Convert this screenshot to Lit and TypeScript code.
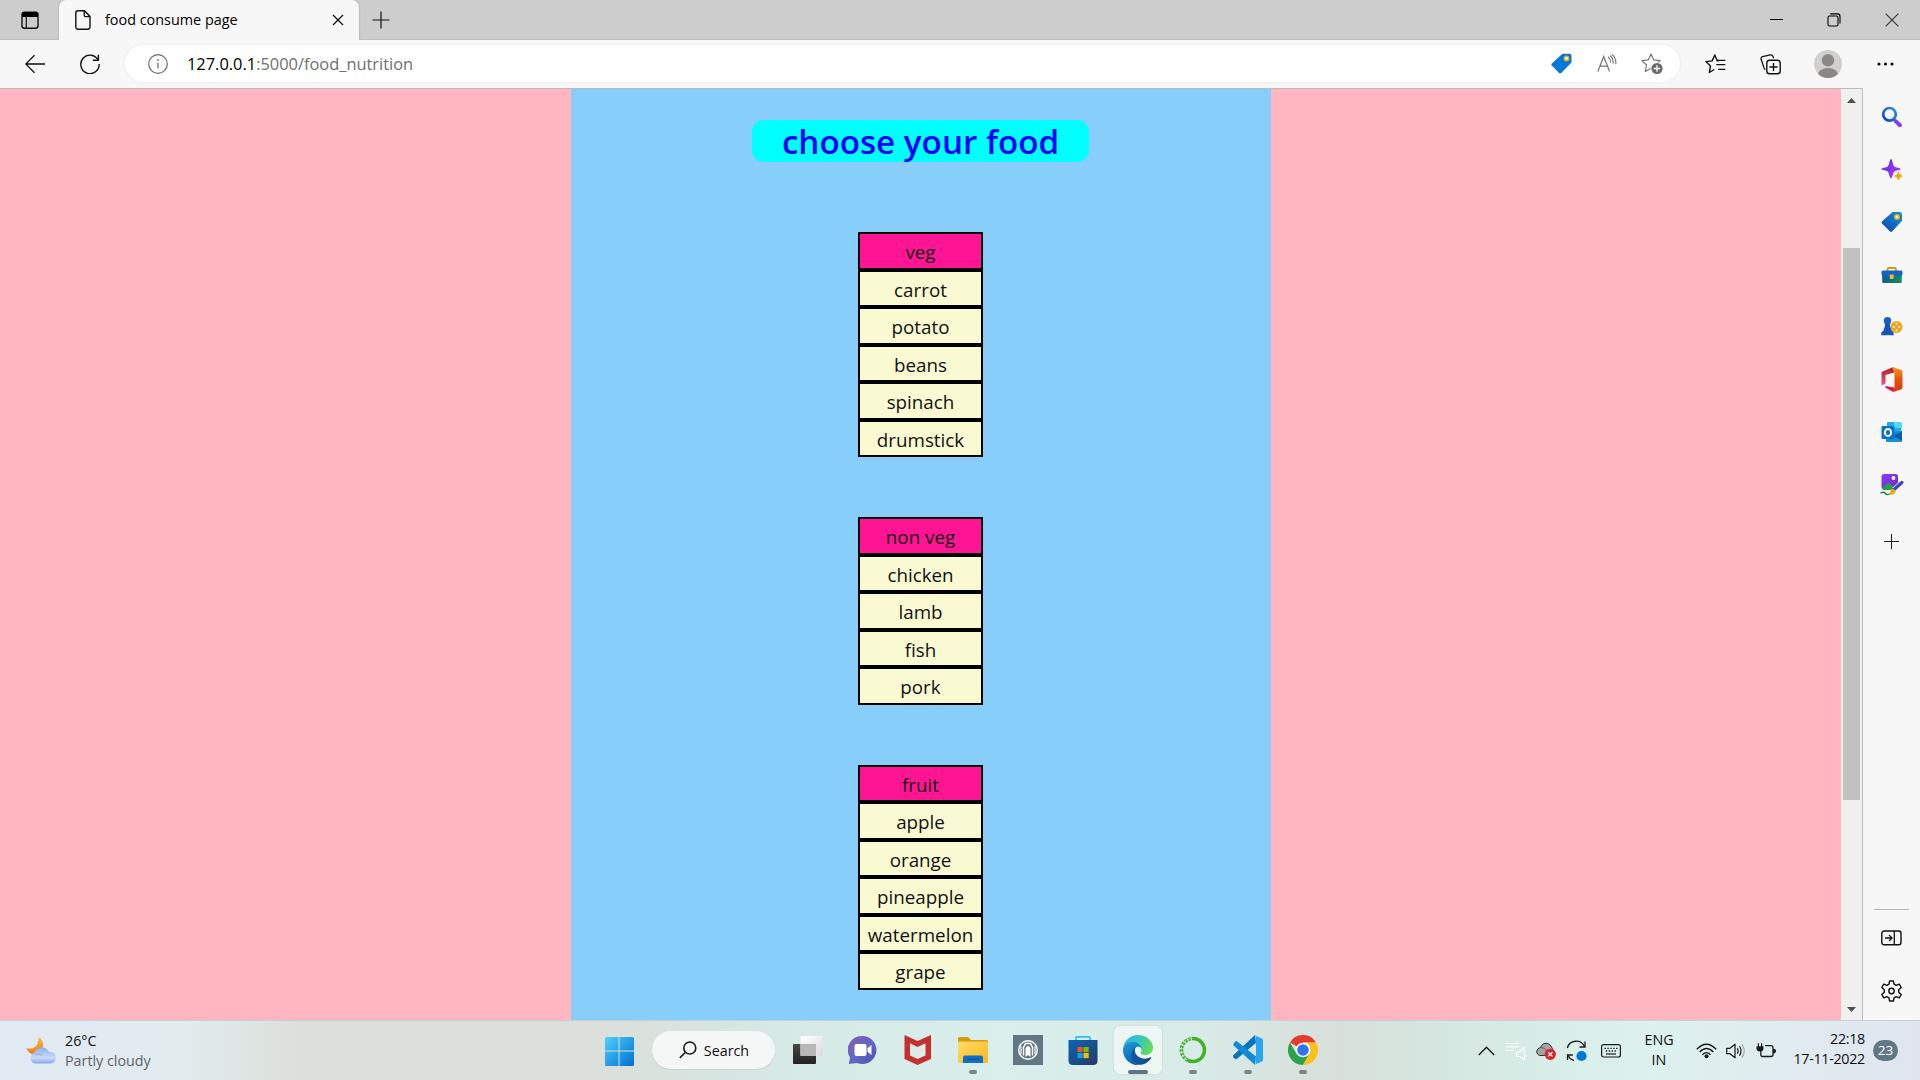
import { LitElement, html, css, svg, SVGTemplateResult, TemplateResult } from "lit";
import { customElement } from "lit/decorators.js";

/** Wraps drawing content in an svg whose pixel size equals its view box. */
const icon = (w: number, h: number, body: SVGTemplateResult, vb?: string): TemplateResult =>
  html`<svg class="ic" width=${w} height=${h} viewBox=${vb ?? `0 0 ${w} ${h}`} fill="none">${body}</svg>`;

/* ---------- browser chrome ---------- */
const tabMenu = icon(20, 20, svg`<rect x="2" y="2.2" width="16" height="16" rx="2.5" stroke="#111" stroke-width="1.4"/><path d="M2 7V4.5Q2 2 4.500 2H15.500Q18 2 18 4.500V7Z" fill="#000"/><path d="M6.300 7V18" stroke="#111" stroke-width="1.200"/>`);
const docIcon = icon(16, 20, svg`<path d="M3 .8H9.400L15 6.400V17a2.200 2.200 0 0 1-2.200 2.200H3A2.200 2.200 0 0 1 .8 17V3A2.200 2.200 0 0 1 3 .8Z" stroke="#111" stroke-width="1.400"/><path d="M9.200 1V5.200Q9.200 6.600 10.600 6.600H14.800" stroke="#111" stroke-width="1.300"/>`);
const tabClose = icon(12, 12, svg`<path d="M1 1 11 11M11 1 1 11" stroke="#111" stroke-width="1.300"/>`);
const plus18 = icon(18, 18, svg`<path d="M9 .5V17.500M.5 9H17.500" stroke="#111" stroke-width="1.200"/>`);
const minIcon = icon(13, 13, svg`<path d="M0 6.500H13" stroke="#000"/>`);
const restoreIcon = icon(14, 14, svg`<rect x="1" y="3" width="10" height="10" rx="1.500" stroke="#000" stroke-width="1.100"/><path d="M3.200 .9H10.500Q13 .9 13 3.400V10.500" stroke="#000" stroke-width="1.100"/>`);
const closeIcon = icon(14, 14, svg`<path d="M.6 .6 13.400 13.400M13.400 .6 .6 13.400" stroke="#333" stroke-width="1.100"/>`);
const backIcon = icon(20, 20, svg`<path d="M20 10H1M9.500 1.200.8 10 9.500 18.800" stroke="#111" stroke-width="1.300"/>`);
const reloadIcon = icon(20, 20, svg`<path d="M18.200 6.200A9.200 9.200 0 1 0 19.200 10" stroke="#111" stroke-width="1.400"/><path d="M18.400 .8V6.200H12.800" stroke="#111" stroke-width="1.400"/>`);
const infoIcon = icon(20, 20, svg`<circle cx="10" cy="10" r="9.300" stroke="#6b6b6b" stroke-width="1.200"/><path d="M10 8.700V14.500" stroke="#6b6b6b" stroke-width="1.300"/><circle cx="10" cy="6" r=".9" fill="#6b6b6b"/>`);
const tagIcon = icon(21, 21, svg`<path d="M11.500 .7H18.500Q20.500 .7 20.500 2.700V9.600L10.200 20Q9.200 20.800 8.200 20L.8 12.600Q-.1 11.600.8 10.600Z" fill="#0078d7"/><circle cx="15.500" cy="5.500" r="2.200" fill="#fff" stroke="#e5ad0c" stroke-width="1.600"/>`);
const readIcon = icon(20, 20, svg`<path d="M.8 17.500 6.700 2.500 12.600 17.500M2.900 12.200H10.500" stroke="#767676" stroke-width="1.200"/><path d="M11 2.800Q13.500 4.800 13.600 8.700M13.200 1.500Q16.300 4.200 16.200 9.700M15.200 .5Q19.300 4 18.900 10.200" stroke="#767676" stroke-width="1.100"/>`);
const starPath = "M10 .9 12.700 6.900 19.200 7.600 14.400 12 15.700 18.500 10 15.200 4.300 18.500 5.600 12 .8 7.600 7.300 6.900Z";
const addFav = icon(22, 21, svg`<path d=${starPath} stroke="#767676" stroke-width="1.200" stroke-linejoin="round"/><circle cx="16" cy="15.500" r="6.300" fill="#fff"/><circle cx="16" cy="15.500" r="5.600" fill="#6a6a6a"/><path d="M16 12.300V18.700M12.800 15.500H19.200" stroke="#fff" stroke-width="1.300"/>`);
const favIcon = icon(21, 20, svg`<path d="M13.700 7.100 12.300 6.900 9.800 1 7.100 6.900.9 7.600 5.500 12 4.300 18.500 9.300 15.500" stroke="#111" stroke-width="1.400" stroke-linejoin="round"/><path d="M12.300 6.300H20.300M11.300 10.700H20.300M13 15.300H20.300" stroke="#111" stroke-width="1.300"/>`);
const collIcon = icon(21, 21, svg`<path d="M4 13.900 1.100 5.300Q.6 3.300 2.500 2.700L10.300.9Q12.300.6 12.900 2.300L13.600 4.300" stroke="#111" stroke-width="1.300"/><path d="M4 13.900Q4.600 15.300 5.400 15.600" stroke="#111" stroke-width="1.300"/><rect x="6.800" y="6.300" width="13.400" height="13.400" rx="2.800" stroke="#111" stroke-width="1.400"/><path d="M13.500 8.900V17.100M9.400 13H17.600" stroke="#111" stroke-width="1.400"/>`);
const avatar = icon(28, 28, svg`<clipPath id="av"><circle cx="14" cy="14" r="14"/></clipPath><circle cx="14" cy="14" r="14" fill="#d2d0ce"/><g clip-path="url(#av)" fill="#8a8785"><circle cx="14" cy="10.300" r="6.200"/><ellipse cx="14" cy="25" rx="10.200" ry="7"/></g>`);
const dotsIcon = icon(17, 4, svg`<circle cx="2" cy="2" r="1.600" fill="#111"/><circle cx="8.500" cy="2" r="1.600" fill="#111"/><circle cx="15" cy="2" r="1.600" fill="#111"/>`);

/* ---------- sidebar ---------- */
const sideIcons = [
  icon(22, 22, svg`<defs><linearGradient id="s1" x1="0" y1="1" x2="1" y2="0"><stop stop-color="#0b3fd0"/><stop offset="1" stop-color="#2c93dc"/></linearGradient></defs><path d="M13 13.500 15 15.500" stroke="#555" stroke-width="2.500"/><path d="M14.900 15.400 18.900 19.200" stroke="#7b3ff2" stroke-width="4" stroke-linecap="round"/><circle cx="8.500" cy="8.300" r="6.300" fill="#f4faff" stroke="url(#s1)" stroke-width="2.700"/>`),
  icon(22, 22, svg`<defs><linearGradient id="s2" x1="0" y1="0" x2="1" y2="1"><stop stop-color="#4a3df0"/><stop offset=".5" stop-color="#8a32f0"/><stop offset="1" stop-color="#a93ff5"/></linearGradient></defs><path d="M10 1C11.300 1 12 7.500 13.300 8.500 14.500 9.500 19.500 9.700 19.500 11 19.500 12.300 14.500 12.500 13.300 13.500 12 14.500 11.300 20.500 10 20.500 8.700 20.500 8 14.500 6.700 13.500 5.500 12.500.5 12.300.5 11 .5 9.700 5.500 9.500 6.700 8.500 8 7.500 8.700 1 10 1Z" fill="url(#s2)"/><path d="M17.500 13Q18.500 17 22 18 18.500 19 17.500 22.500 16.500 19 13 18 16.500 17 17.500 13Z" fill="#f3a90c"/>`),
  icon(22, 22, svg`<defs><linearGradient id="s3" x1="0" y1="1" x2="1" y2="0"><stop stop-color="#0b45b5"/><stop offset="1" stop-color="#1793cc"/></linearGradient></defs><path d="M11.500 1H18.500Q21 1 21 3.500V9.800L11.300 20.300Q10 21.500 8.800 20.300L1.200 12.800Q0 11.500 1.200 10.300Z" fill="url(#s3)"/><circle cx="16" cy="6" r="2.200" fill="#fff" stroke="#e5ad0c" stroke-width="1.600"/>`),
  icon(22, 22, svg`<defs><linearGradient id="s4" x1="0" y1="0" x2="1" y2="0"><stop stop-color="#0d5a9b"/><stop offset="1" stop-color="#12905a"/></linearGradient></defs><path d="M6.500 7V5.500Q6.500 4 8 4H13.500Q15 4 15 5.500V7" stroke="#d9960d" stroke-width="1.900"/><rect x="1.200" y="10" width="19.600" height="9" rx="1.300" fill="url(#s4)"/><rect x=".5" y="6.500" width="21" height="5" rx="1.500" fill="#1464c8"/><rect x="8.700" y="10.500" width="4" height="4.500" rx="1" fill="#f5b62a"/>`),
  icon(22, 22, svg`<circle cx="15.500" cy="11" r="6" fill="#eda51b"/><g fill="#fff"><circle cx="15.500" cy="7.700" r="1"/><circle cx="12.800" cy="11" r="1"/><circle cx="18.300" cy="11" r="1"/><circle cx="15.500" cy="14.200" r="1"/></g><circle cx="6.500" cy="4.700" r="3.700" fill="#1862c4"/><path d="M3.500 7.300H9.500L8.800 9 10.500 14.500 12.700 16.800V19.300H.2V16.800L2.500 14.500 4.200 9Z" fill="#1656b8"/>`),
  icon(22, 25, svg`<defs><linearGradient id="s6" x1="0" y1="0" x2="0" y2="1"><stop stop-color="#f59a1d"/><stop offset=".5" stop-color="#e3500b"/><stop offset="1" stop-color="#d93b08"/></linearGradient><linearGradient id="s7" x1="0" y1="0" x2="0" y2="1"><stop stop-color="#b3251b"/><stop offset="1" stop-color="#e9528f"/></linearGradient></defs><path d="M11 .5 1.600 4.500Q.5 5 .5 6.300V18.500L4.500 16.500V8L13.500 5.500V.8Z" fill="url(#s7)"/><path d="M13 .5 20 2.800Q21.500 3.300 21.500 4.800V20.500Q21.500 22 20 22.500L12.500 24.700 13.500 20V5L11 .5Z" fill="url(#s6)"/><path d="M4.500 19 13.500 20.500V24.500Q12 25 10.600 24.300L4.500 20.800Z" fill="#d32345"/>`),
  icon(22, 22, svg`<rect x="6" y="1" width="14.500" height="11" rx="1" fill="#28a8ea"/><path d="M13 1H19.500Q20.500 1 20.500 2V7H13Z" fill="#50d9ff"/><path d="M5 11 21 10V20Q21 21 20 21H6Q5 21 5 20Z" fill="#1490df"/><path d="M21 10.500V20L12 14.500Z" fill="#0a5da8"/><rect x=".5" y="5" width="13" height="13" rx="1.300" fill="#0f72c9"/><ellipse cx="7" cy="11.500" rx="3.200" ry="3.500" stroke="#fff" stroke-width="1.900"/>`),
  icon(24, 24, svg`<defs><linearGradient id="s8" x1="0" y1="0" x2="1" y2="1"><stop stop-color="#8a3ff3"/><stop offset="1" stop-color="#7522c8"/></linearGradient></defs><rect x="1.500" y="1" width="16.500" height="15.500" rx="2.500" fill="url(#s8)"/><circle cx="13.500" cy="5" r="1.900" fill="#fff"/><path d="M2 15 8.500 9.500 16 15.500 13 17H4.500Q2.500 17 2 15Z" fill="#1fa04b"/><path d="M0 18H18" stroke="#f7f7f7" stroke-width="1.500"/><path d="M.5 20Q4 18.500 5 20T7.500 21.500 10.500 20.500" stroke="#138a3c" stroke-width="1.500"/><path d="M14 16.500 21.800 9.500" stroke="#f7f7f7" stroke-width="5"/><path d="M13.500 17 21.800 9.500" stroke="#3949c6" stroke-width="3.400" stroke-linecap="round"/><path d="M11.800 15.700Q15.500 16 15.500 19.300 13.500 23 8.700 21.800 10.500 20.500 10.300 18 10.700 16 11.800 15.700Z" fill="#f0a51c"/>`),
];
const plus15 = icon(15, 15, svg`<path d="M7.500 0V15M0 7.500H15" stroke="#222" stroke-width="1.100"/>`);
const panelIcon = icon(21, 16, svg`<rect x=".8" y="1" width="19.200" height="13.800" rx="2.300" stroke="#111" stroke-width="1.400"/><path d="M13.300 1V15M4 8H11M8 5 11 8 8 11" stroke="#111" stroke-width="1.300"/>`);
const gearIcon = icon(21, 22, svg`<path d="M8.600 1H12.400L13 4.100 15.200 5.400 18.300 4.200 20.200 7.500 17.700 9.700V12.300L20.200 14.500 18.300 17.800 15.200 16.600 13 17.900 12.400 21H8.600L8 17.900 5.800 16.600 2.700 17.800.8 14.500 3.300 12.300V9.700L.8 7.500 2.700 4.200 5.800 5.400 8 4.100Z" stroke="#111" stroke-width="1.400" stroke-linejoin="round"/><circle cx="10.500" cy="11" r="2.700" stroke="#111" stroke-width="1.400"/>`);

/* ---------- taskbar ---------- */
const weather = icon(32, 28, svg`<defs><linearGradient id="w1" x1="0" y1="0" x2="0" y2="1"><stop stop-color="#f6bd42"/><stop offset="1" stop-color="#ec7c1c"/></linearGradient><linearGradient id="w2" x1="0" y1="0" x2="0" y2="1"><stop stop-color="#8eaeea"/><stop offset=".65" stop-color="#c9dbf8"/><stop offset="1" stop-color="#87a5e6"/></linearGradient></defs><path d="M12.500 0Q19 4 16.500 12 13 18.500 6 17 1.500 15 .5 11 5 13 9.500 9.500 13 6 12.500 0Z" fill="url(#w1)"/><path d="M9.500 26.500A5.500 5.500 0 0 1 8.500 15.800Q11 9.800 17 10.500 21.500 11 23.300 15 29.500 14.500 30 20.700 29.500 26 24.500 26.500Z" fill="url(#w2)"/><path d="M9 17.200Q13 16 16 18.500" stroke="#7f9fe2" stroke-width=".8"/>`);
const startLogo = icon(30, 30, svg`<defs><linearGradient id="t0" gradientUnits="userSpaceOnUse" x1="0" y1="0" x2="29" y2="29"><stop stop-color="#4fd2fb"/><stop offset="1" stop-color="#0270d4"/></linearGradient></defs><path d="M1.500 1H13.500V14.500H0V2.500Q0 1 1.500 1ZM14.500 1H27.500Q29 1 29 2.500V14.500H14.500ZM0 15.500H13.500V30H1.500Q0 30 0 28.500ZM14.500 15.500H29V28.500Q29 30 27.500 30H14.500Z" fill="url(#t0)"/>`);
const searchGlyph = icon(18, 18, svg`<circle cx="10.800" cy="7" r="6" stroke="#1b1b1b" stroke-width="1.600"/><path d="M6.500 11.300.9 16.900" stroke="#1b1b1b" stroke-width="1.600"/>`);
const taskIcons: { body: TemplateResult; run?: boolean; active?: boolean }[] = [
  { body: icon(30, 30, svg`<defs><linearGradient id="t1" x1="0" y1="0" x2="0" y2="1"><stop stop-color="#474745"/><stop offset="1" stop-color="#222"/></linearGradient><linearGradient id="t2" x1="0" y1="0" x2="1" y2="1"><stop stop-color="#fff"/><stop offset="1" stop-color="#d9dcdb"/></linearGradient></defs><rect x="0" y="9" width="23" height="20" rx="1" fill="url(#t1)"/><rect x="7.500" y="1" width="22.500" height="20" rx="1" fill="url(#t2)"/><rect x="7.500" y="9" width="15.500" height="12" fill="#b7b8b7"/>`) },
  { body: icon(30, 30, svg`<defs><linearGradient id="t3" x1="0" y1="0" x2="1" y2="1"><stop stop-color="#8d5aa8"/><stop offset=".5" stop-color="#6268c4"/><stop offset="1" stop-color="#4f4fb8"/></linearGradient></defs><path d="M15 1A14 14 0 1 1 9 27.900L.8 29 2 22.500A14 14 0 0 1 15 1Z" fill="url(#t3)"/><rect x="6.500" y="9" width="12" height="12" rx="2" fill="#fff"/><path d="M19.500 13.200 23.500 10V20L19.500 16.800Z" fill="#fff"/>`) },
  { body: icon(30, 32, svg`<path d="M1.500 1 14.500 7 28 1V25L14.500 31 1.500 25Z" fill="#c5302e"/><path d="M7 9.200 14.500 13 22.500 9.200V21.500L14.500 25 7 21.500Z" fill="#dcebe7"/>`) },
  { run: true, body: icon(30, 30, svg`<defs><linearGradient id="t4" x1="0" y1="0" x2="1" y2="1"><stop stop-color="#ffdc67"/><stop offset="1" stop-color="#f6b81d"/></linearGradient></defs><path d="M0 3.500Q0 2 1.500 2H10L13 5H28.500Q30 5 30 6.500V12H0Z" fill="#d99a0a"/><rect x="0" y="6.500" width="30" height="21.500" rx="1.500" fill="url(#t4)"/><path d="M5 28V22.500Q5 20.500 7 20.500H23Q25 20.500 25 22.500V28Z" fill="#0f6fc5"/><path d="M9 24.300H21" stroke="#0a4c91" stroke-width="1.200"/>`) },
  { body: icon(30, 30, svg`<rect width="30" height="30" fill="#617784"/><circle cx="15" cy="15" r="9.300" stroke="#fff" stroke-width="1.500"/><path d="M10.500 20.500V12.500L12.500 8.500H17.500L19.500 12.500V20.500" stroke="#fff" stroke-width="1.400"/><path d="M12.500 22V13.500Q13 11 15 11T17.500 13.500V22L15 20Z" fill="#fff"/><path d="M8 11V19M22 11V19" stroke="#fff" stroke-width="1.200"/>`) },
  { body: icon(30, 30, svg`<defs><linearGradient id="t5" x1="0" y1="0" x2="1" y2="1"><stop stop-color="#0b64b3"/><stop offset="1" stop-color="#253a66"/></linearGradient></defs><path d="M8 7V3Q8 1.800 9.200 1.800H20.800Q22 1.800 22 3V7" stroke="#2cc0f2" stroke-width="1.700"/><path d="M.5 5H29.500V25.500Q29.500 30 25 30H5Q.5 30 .5 25.500Z" fill="url(#t5)"/><rect x="9.500" y="12" width="5.200" height="5.200" fill="#f25022"/><rect x="15.500" y="12" width="5.200" height="5.200" fill="#7fba00"/><rect x="9.500" y="18" width="5.200" height="5.200" fill="#00a4ef"/><rect x="15.500" y="18" width="5.200" height="5.200" fill="#ffb900"/>`) },
  { run: true, active: true, body: icon(30, 30, svg`<defs><linearGradient id="e1" x1="0" y1="0" x2="1" y2="0"><stop stop-color="#0c59a4"/><stop offset="1" stop-color="#114a8b"/></linearGradient><linearGradient id="e2" x1="0" y1="0" x2=".6" y2="1"><stop stop-color="#1f9fe0"/><stop offset="1" stop-color="#0a5da8"/></linearGradient><linearGradient id="e3" x1="0" y1=".3" x2="1" y2=".6"><stop stop-color="#2fb4e8"/><stop offset=".5" stop-color="#37c6c0"/><stop offset="1" stop-color="#66e04b"/></linearGradient></defs><path d="M235.680 190.460a93.730 93.730 0 0 1-10.540 4.710 101.870 101.870 0 0 1-35.900 6.460c-47.320 0-88.540-32.550-88.540-74.320A31.480 31.480 0 0 1 117.130 100c-42.800 1.800-53.800 46.400-53.800 72.530 0 73.880 68.090 81.370 82.760 81.370 7.910 0 19.840-2.300 27-4.560l1.310-.44a128.340 128.340 0 0 0 66.600-52.800 4 4 0 0 0-5.320-5.640z" fill="url(#e1)"/><path d="M105.730 241.420A79.200 79.200 0 0 1 83 220.080 80.720 80.720 0 0 1 112.530 102c3.120-1.470 8.450-4.130 15.540-4a32.350 32.350 0 0 1 25.690 13 31.880 31.880 0 0 1 6.360 18.660c0-.21 24.460-79.600-80-79.600-43.900 0-80 41.660-80 78.210a130.150 130.150 0 0 0 12.110 56 128 128 0 0 0 156.380 67.110 75.550 75.550 0 0 1-62.780-8z" fill="url(#e2)"/><path d="M152.330 148.860c-.81 1.050-3.300 2.500-3.300 5.660 0 2.610 1.700 5.120 4.720 7.230 14.380 10 41.490 8.680 41.560 8.680a59.560 59.560 0 0 0 30.270-8.350A61.380 61.380 0 0 0 256 109.400c.26-22.410-8-37.310-11.340-43.910C223.460 24 177.720 0 128 0A128 128 0 0 0 0 126.200c.48-36.540 36.800-66.050 80-66.050 3.500 0 23.460.34 42 10.070 16.340 8.580 24.900 18.940 30.850 29.210 6.180 10.670 7.280 24.150 7.280 29.520s-2.740 13.330-7.800 19.910z" fill="url(#e3)"/>`, "0 0 256 256") },
  { run: true, body: icon(30, 30, svg`<path d="M15 3.500A11.500 11.500 0 1 1 10 25.400" stroke="#43b02a" stroke-width="3.600"/><path d="M10 25.400A11.500 11.500 0 0 1 15 3.500" stroke="#43b02a" stroke-width="3.600" stroke-dasharray="2.800 .9"/><path d="M9 25A11.500 11.500 0 0 1 14 3.500" stroke="#d9ede9" stroke-width=".8" stroke-dasharray="3 1"/>`) },
  { run: true, body: icon(30, 30, svg`<path d="M22 0 0 20.500V22L2 24Q3 24.500 4 23.800L23 8Z" fill="#0a74bd"/><path d="M4 6.200 23 21.500 22 30 .3 10.300Q0 9.300.5 8.700L2.200 6.500Q3 5.700 4 6.200Z" fill="#118bd4"/><path d="M21.500 .2 29 3.500Q30 4 30 5.200V24.800Q30 26 29 26.500L21.500 29.800Q23 29 23 27V3Q23 1 21.500 .2Z" fill="#29a4f0"/>`) },
  { run: true, body: icon(30, 30, svg`<path d="M15 15 2 7.500A15 15 0 0 1 28 7.500H15Z" fill="#e33b2e"/><path d="M2 7.500A15 15 0 0 0 15 30L21.500 18.750 15 15 8.500 18.750Z" fill="#2da04a"/><path d="M28 7.500A15 15 0 0 1 15 30L21.500 18.750Q23.500 13 20 9L15 7.500Z" fill="#fbc116"/><circle cx="15" cy="15" r="7.300" fill="#fff"/><circle cx="15" cy="15" r="5.800" fill="#2f74ea"/>`) },
];
const chevron = icon(17, 10, svg`<path d="M.8 9 8.500 1.200 16.200 9" stroke="#1b1b1b" stroke-width="1.400"/>`);
const listSpeaker = icon(20, 20, svg`<path d="M0 2.500H12M0 6H12M0 9.500H8" stroke="#fff" stroke-width="1.200"/><path d="M10.500 11H13.500L18.500 6.500V18.500L13.500 15.500H10.500Z" stroke="#fff" stroke-width="1.200"/>`);
const cloudErr = icon(20, 20, svg`<path d="M4 14.500Q.3 13.500.8 10 1.500 7 4.500 6.500 6.500 1.800 11 2.200 14 2.800 15.500 6L17 9 10 14.500Z" fill="#a5a5a5" stroke="#333" stroke-width="1"/><path d="M4.500 6.500Q9 6 12 11" stroke="#444" stroke-width=".8"/><circle cx="14.300" cy="13.300" r="5.600" fill="#d9252e"/><path d="M12.200 11.200 16.400 15.400M16.400 11.200 12.200 15.400" stroke="#fff" stroke-width="1.300"/>`);
const syncIcon = icon(21, 22, svg`<path d="M1.300 8A9.200 9.200 0 0 1 18.500 6.500M19 1.500V7H13.500M1.500 20V15H6.800M2 15.300Q4 19.500 8 20.500" stroke="#1b1b1b" stroke-width="1.300"/><circle cx="15.500" cy="16" r="5.100" fill="#0078d7"/>`);
const keyboard = icon(20, 14, svg`<rect x=".6" y=".6" width="18.800" height="12.400" rx="2" stroke="#1b1b1b" stroke-width="1.200"/><path d="M3.500 4.300H17M4.800 7H16" stroke="#1b1b1b" stroke-width="1.300" stroke-dasharray="1.400 1.500"/><path d="M5 10H15" stroke="#1b1b1b" stroke-width="1.200"/>`);
const wifi = icon(21, 16, svg`<path d="M.8 6.300Q10.500-3.700 20.200 6.300M3.700 9Q10.500 2 17.300 9M6.500 11.700Q10.500 7.500 14.500 11.700" stroke="#1b1b1b" stroke-width="1.400"/><circle cx="10.500" cy="13.300" r="2" fill="#1b1b1b"/>`);
const volume = icon(20, 16, svg`<path d="M.7 5.300H4L9 1.200V14.800L4 10.700H.7Z" stroke="#1b1b1b" stroke-width="1.200" stroke-linejoin="round"/><path d="M11.300 5.300Q13 8 11.300 10.700M13.500 3.300Q16.500 8 13.500 12.700" stroke="#1b1b1b" stroke-width="1.200"/><path d="M16 1.200Q20.500 8 16 14.800" stroke="#9ba5a5" stroke-width="1.100"/>`);
const battery = icon(21, 16, svg`<path d="M9 2.700H15Q17 2.700 17 4.700V11.500Q17 13.500 15 13.500H6.500Q4.800 13.500 4.800 11.800V8" stroke="#1b1b1b" stroke-width="1.300"/><path d="M.5 3.300H7.500V6Q7 8.500 4 8.500 1 8.500.5 6ZM1.800 .2H3V3.300H1.800ZM5 .2H6.200V3.300H5Z" fill="#1b1b1b"/><path d="M17 5.700Q20 5.700 20 8.100T17 10.500Z" fill="#1b1b1b"/>`);

const menu = [
  ["veg", "carrot", "potato", "beans", "spinach", "drumstick"],
  ["non veg", "chicken", "lamb", "fish", "pork"],
  ["fruit", "apple", "orange", "pineapple", "watermelon", "grape"],
];

@customElement("app-root")
export class AppRoot extends LitElement {
  static styles = css`
    :host { display: block; width: 1920px; height: 1080px; overflow: hidden; font-family: "Open Sans", "Noto Sans", sans-serif; color: #111; }
    * { box-sizing: border-box; }
    .ic { display: block; flex: none; }
    .screen { display: grid; grid-template-rows: 40px 48px 932px 60px; height: 1080px; background: #f7f7f7; }
    .slot { display: flex; align-items: center; justify-content: center; }
    .tabs { display: grid; grid-template-columns: 59px 300px 43px 1fr 57px 58px 57px; background: #cdcdcd; box-shadow: inset 0 -1px #c0c0c0; }
    .tabs > .ctl { padding-bottom: 1px; }
    .tab { display: flex; align-items: center; background: #f7f7f7; border-radius: 7px 7px 0 0; padding: 0 15px 0 16px; box-shadow: 0 0 2px #999; clip-path: inset(0 -3px 0 -3px); }
    .tabname { flex: 1; margin-left: 14px; font-size: 14.400px; color: #000; line-height: 20px; white-space: nowrap; }
    .bar { display: grid; grid-template-columns: 54px 56px 1555px 56px 54px 62px 52px; padding-left: 8px; }
    .addr { display: grid; grid-template-columns: 59px 1fr 46px 46px 44px; height: 37px; border-radius: 19px; background: #fff; padding: 0 6px 0 3px; box-shadow: 0 0 3px #e6e6e6; margin: 5px 0 6px; }
    .bar { grid-template-columns: 54px 56px 7px 1555px 7px 56px 54px 62px 52px; }
    .url { font-size: 16.400px; line-height: 37px; color: #6f6f6f; white-space: nowrap; }
    .host { color: #000; }
    .main { display: grid; grid-template-columns: 1863px 57px; }
    .view { display: grid; grid-template-columns: 1841px 21px; border-top: 1px solid #bbb; border-right: 1px solid #bbb; }
    .page { background: #ffb6c1; overflow: hidden; height: 931px; }
    .col { width: 700px; height: 931px; margin-left: 571px; background: #87cefa; display: flex; flex-direction: column; align-items: center; padding: 31px 1px 0 0; }
    .title { width: 337px; height: 42px; margin: 0 0 70px; border-radius: 12px; background: #0ff; color: #00f; font-size: 33.200px; font-weight: 600; line-height: 44px; text-align: center; white-space: nowrap; }
    .group { width: 125px; margin-bottom: 60px; }
    .cell { height: 37.500px; border: 2px solid #000; background: #fafad2; font-size: 18.800px; line-height: 36.500px; text-align: center; white-space: nowrap; }
    .head { background: #ff1493; }
    .scroll { background: #f0f0f0; display: flex; flex-direction: column; align-items: center; height: 931px; }
    .arrow { height: 19px; padding-top: 9px; }
    .thumb { width: 17px; height: 552px; margin-top: 140px; background: #c1c1c1; }
    .down { margin-top: auto; height: 13px; }
    .side { display: flex; flex-direction: column; align-items: center; padding-top: 2.500px; }
    .side .slot { height: 52.600px; width: 57px; }
    .side .add { height: 60px; }
    .rule { width: 35px; height: 1px; background: #b9b9b9; margin-top: auto; }
    .side .foot { height: 52.500px; }
    .side .first { margin-top: 2px; }
    .side .last { margin-bottom: 3px; }
    .task { display: grid; grid-template-columns: 592px 55px 133px 550px 1fr 30px 30px 30px 30px 40px 60px 30px 30px 30px 84px 33px; padding-right: 22px; border-top: 1px solid rgba(190,200,200,.7); background: linear-gradient(90deg, #e1eaf3 0, #e2ebee 180px, #dce0da 300px, #dadfda 600px, #d6e9e5 780px, #d9efeb 1000px, #d8ebe7 1200px, #d8dfda 1340px, #d5e8e1 1450px, #dcf1ee 1640px, #e1ebef 1800px, #e0e5f0 1920px); }
    .weather { display: flex; align-items: center; padding: 0 0 0 26px; gap: 7px; }
    .two { font-size: 14.300px; line-height: 20px; white-space: nowrap; }
    .dim { color: #5d6264; }
    .search { display: flex; align-items: center; justify-content: center; gap: 7px; width: 123px; height: 38px; margin: 10px 5px; border-radius: 19px; background: #f4f7f6; box-shadow: 0 1px 1px #c9d0ce; font-size: 14.300px; padding-left: 1px; }
    .apps { display: flex; }
    .tile { position: relative; width: 48px; height: 48px; margin: 5px 3.500px 0; border-radius: 6px; display: flex; align-items: center; justify-content: center; }
    .on { background: #eef6f4; box-shadow: 0 0 1px 1px #d3e0dd; }
    .dot { position: absolute; bottom: 0; left: 20px; width: 8px; height: 4px; border-radius: 2px; background: #7d8582; }
    .on .dot { left: 14px; width: 20px; background: #5d7685; }
    .lang { text-align: center; padding: 9px 4px 0 0; }
    .clock { text-align: right; padding-top: 8px; letter-spacing: -0.300px; }
    .badge { width: 25px; height: 21px; border-radius: 11px; margin: 19px 0 0 8px; background: #617784; color: #fff; font-size: 13.500px; line-height: 21px; text-align: center; }
  `;

  render() {
    return html`<div class="screen">
      <div class="tabs">
        <div class="slot">${tabMenu}</div>
        <div class="tab">${docIcon}<span class="tabname">food consume page</span>${tabClose}</div>
        <div class="slot ctl">${plus18}</div>
        <div></div>
        <div class="slot ctl">${minIcon}</div>
        <div class="slot ctl">${restoreIcon}</div>
        <div class="slot ctl">${closeIcon}</div>
      </div>
      <div class="bar">
        <div class="slot">${backIcon}</div>
        <div class="slot">${reloadIcon}</div>
        <div></div>
        <div class="addr">
          <div class="slot">${infoIcon}</div>
          <div class="url"><span class="host">127.0.0.1</span>:5000/food_nutrition</div>
          <div class="slot">${tagIcon}</div>
          <div class="slot">${readIcon}</div>
          <div class="slot">${addFav}</div>
        </div>
        <div></div>
        <div class="slot">${favIcon}</div>
        <div class="slot">${collIcon}</div>
        <div class="slot">${avatar}</div>
        <div class="slot">${dotsIcon}</div>
      </div>
      <div class="main">
        <div class="view">
          <div class="page">
            <div class="col">
              <div class="title">choose your food</div>
              ${menu.map((rows) => html`<div class="group">${rows.map((r, i) => html`<div class="cell ${i ? "" : "head"}">${r}</div>`)}</div>`)}
            </div>
          </div>
          <div class="scroll">
            <div class="arrow">${icon(9, 5, svg`<path d="M0 5 4.500 0 9 5Z" fill="#505050"/>`)}</div>
            <div class="thumb"></div>
            <div class="down">${icon(9, 5, svg`<path d="M0 0H9L4.500 5Z" fill="#505050"/>`)}</div>
          </div>
        </div>
        <div class="side">
          ${sideIcons.map((s) => html`<div class="slot">${s}</div>`)}
          <div class="slot add">${plus15}</div>
          <div class="rule"></div>
          <div class="slot foot first">${panelIcon}</div>
          <div class="slot foot last">${gearIcon}</div>
        </div>
      </div>
      <div class="task">
        <div class="weather">${weather}<div class="two"><div>26°C</div><div class="dim">Partly cloudy</div></div></div>
        <div class="slot">${startLogo}</div>
        <div class="search">${searchGlyph}<span>Search</span></div>
        <div class="apps">${taskIcons.map((t) => html`<div class="tile ${t.active ? "on" : ""}">${t.body}${t.run ? html`<span class="dot"></span>` : ""}</div>`)}</div>
        <div></div>
        <div class="slot">${chevron}</div>
        <div class="slot">${listSpeaker}</div>
        <div class="slot">${cloudErr}</div>
        <div class="slot">${syncIcon}</div>
        <div class="slot">${keyboard}</div>
        <div class="two lang"><div>ENG</div><div>IN</div></div>
        <div class="slot">${wifi}</div>
        <div class="slot">${volume}</div>
        <div class="slot">${battery}</div>
        <div class="two clock"><div>22:18</div><div>17-11-2022</div></div>
        <div class="badge">23</div>
      </div>
    </div>`;
  }
}
